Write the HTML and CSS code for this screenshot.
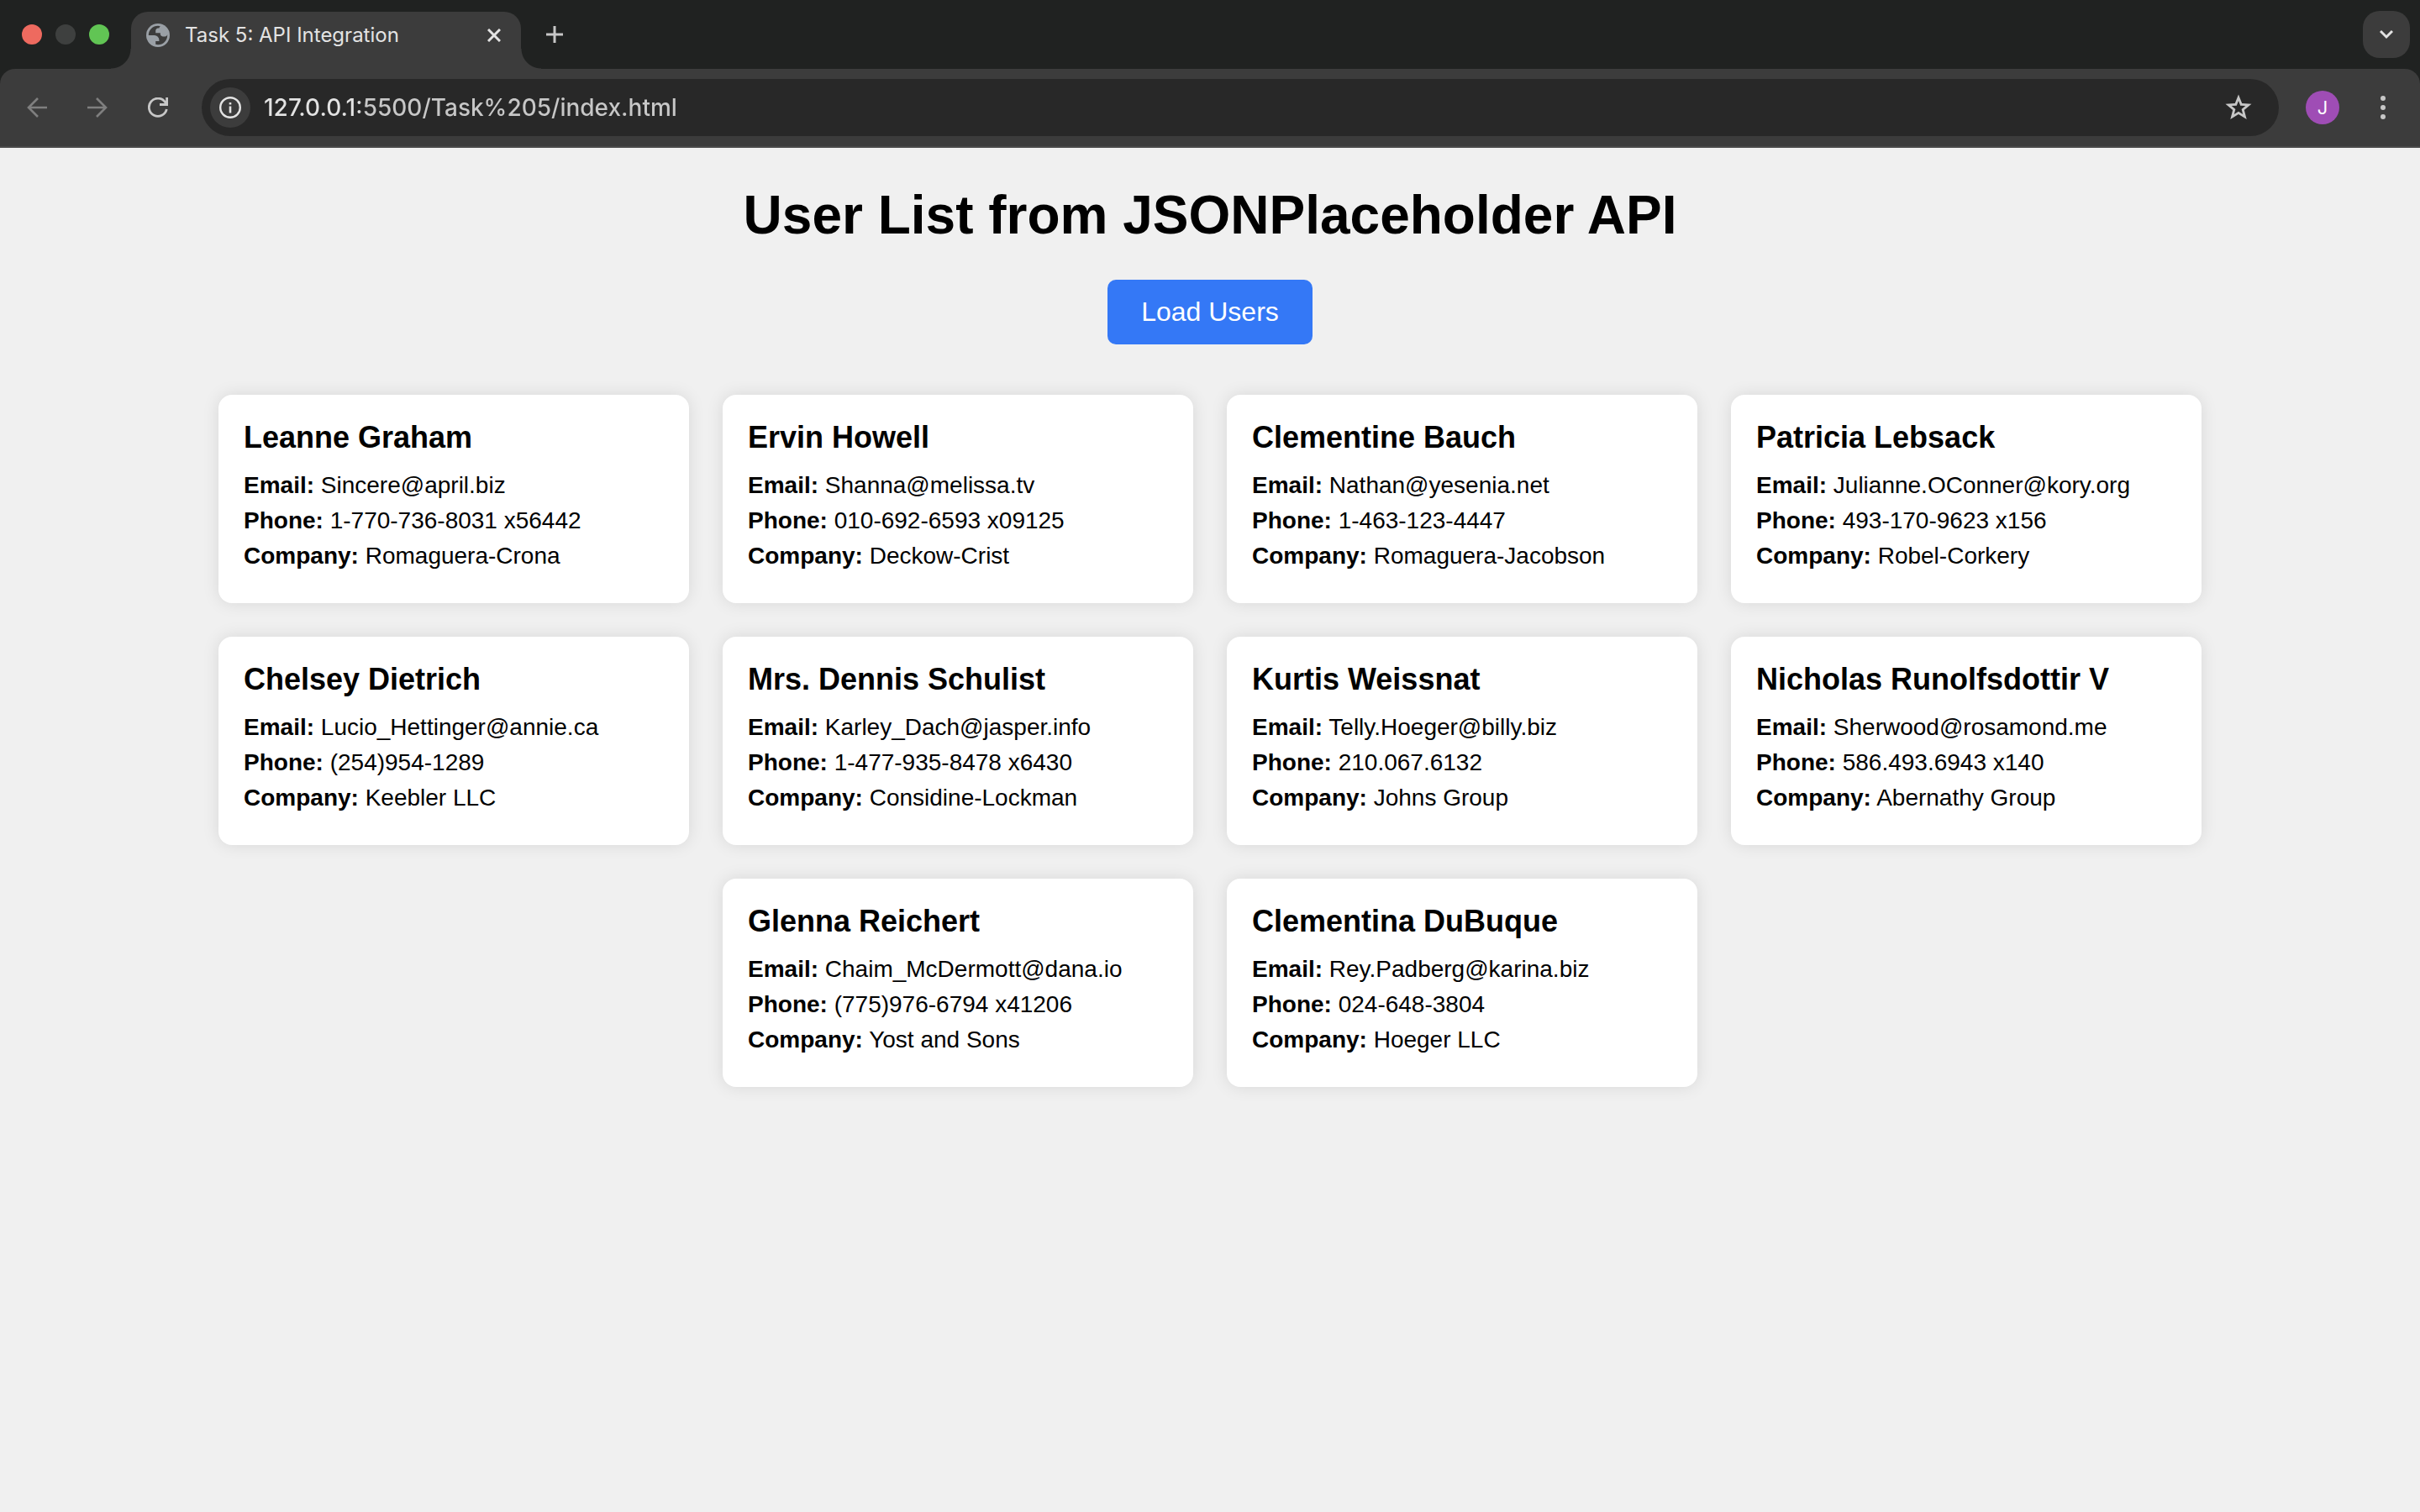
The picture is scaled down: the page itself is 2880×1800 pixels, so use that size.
FILE: index.html
```html
<!DOCTYPE html>
<html lang="en">
<head>
<meta charset="utf-8">
<meta name="viewport" content="width=device-width, initial-scale=1">
<title>Task 5: API Integration</title>
<link rel="stylesheet" href="styles.css">
</head>
<body>
<header class="browser">
  <div class="tab-strip">
    <div class="lights">
      <button class="light light-close" type="button" aria-label="Close window"></button>
      <button class="light light-min" type="button" aria-label="Minimise window"></button>
      <button class="light light-max" type="button" aria-label="Maximise window"></button>
    </div>
    <div class="tab">
      <svg class="globe" viewBox="80 -880 800 800" aria-hidden="true"><circle cx="480" cy="-480" r="400" fill="#9aa0a6"/><path fill="#3c3c3c" d="M480-160q133 0 226.500-93.500T800-480q0-7-.5-14.500T799-507q-5 29-27 48t-52 19h-80q-33 0-56.500-23.500T560-520v-40H400v-80q0-33 23.500-56.500T480-720h40q0-23 12.500-40.500T563-789q-20-5-40.500-8t-42.500-3q-134 0-227 93t-93 227h200q66 0 113 47t47 113v40H400v110q20 5 39.500 7.500T480-160Z"/></svg>
      <span class="tab-title">Task 5: API Integration</span>
      <button class="icon-button tab-close" type="button" aria-label="Close tab"><svg class="icon-close" viewBox="0 0 16 16"><path d="M1 1L15 15M15 1L1 15" stroke="#e3e3e3" stroke-width="3"/></svg></button>
    </div>
    <button class="icon-button new-tab" type="button" aria-label="New tab"><svg class="icon-plus" viewBox="0 0 20 20"><path d="M10 0V20M0 10H20" stroke="#c7c7c7" stroke-width="3"/></svg></button>
    <button class="icon-button tab-search" type="button" aria-label="Search tabs"><svg class="icon-close" viewBox="0 0 16 16"><path d="M1 4L8 11L15 4" fill="none" stroke="#e3e3e3" stroke-width="3"/></svg></button>
  </div>
  <div class="toolbar">
    <nav class="nav-buttons">
      <button class="icon-button" type="button" aria-label="Back"><svg class="icon" viewBox="0 0 24 24"><path d="M24 12H2M13 1L2 12L13 23" fill="none" stroke="#7f7f7f" stroke-width="2.600"/></svg></button>
      <button class="icon-button" type="button" aria-label="Forward"><svg class="icon" viewBox="0 0 24 24"><path d="M0 12H22M11 1L22 12L11 23" fill="none" stroke="#7f7f7f" stroke-width="2.600"/></svg></button>
      <button class="icon-button" type="button" aria-label="Reload"><svg class="icon" viewBox="0 0 24 24"><path d="M22.300 14A10.600 10.600 0 1 1 20.500 5.500L22 8M22.600 0V8.500H14" fill="none" stroke="#c7c7c7" stroke-width="2.800"/></svg></button>
    </nav>
    <div class="omnibox">
      <button class="icon-button site-info" type="button" aria-label="Site information"><svg class="icon-info" viewBox="0 0 26 26"><circle cx="13" cy="13" r="11.800" fill="none" stroke="#e3e3e3" stroke-width="2.400"/><path d="M13 11.500V19.500M13 7V9.600" stroke="#e3e3e3" stroke-width="2.600"/></svg></button>
      <input class="address" type="text" aria-label="Address" value="127.0.0.1:5500/Task%205/index.html">
      <button class="icon-button" type="button" aria-label="Bookmark this page"><svg class="icon-star" viewBox="0 0 32 32"><path fill-rule="evenodd" d="M16 0.500L20.200 11L31.500 11.800L22.800 19L25.700 30L16 24L6.300 30L9.200 19L0.500 11.800L11.800 11ZM16 8L13.800 13.700L7.700 14.100L12.400 18L10.800 24L16 20.700L21.200 24L19.600 18L24.300 14.100L18.200 13.700Z" fill="#c7c7c7"/></svg></button>
    </div>
    <button class="avatar" type="button" aria-label="Profile J">J</button>
    <button class="icon-button menu" type="button" aria-label="Browser menu"><svg class="icon-menu" viewBox="0 0 8 28" fill="#c7c7c7"><circle cx="4" cy="3" r="3"/><circle cx="4" cy="14" r="3"/><circle cx="4" cy="25" r="3"/></svg></button>
  </div>
</header>
<main class="page">
  <h1 class="title">User List from JSONPlaceholder API</h1>
  <button class="load" type="button">Load Users</button>
  <section class="users">
    <article class="card"><h2 class="name">Leanne Graham</h2><p class="row"><strong>Email:</strong> Sincere@april.biz</p><p class="row"><strong>Phone:</strong> 1-770-736-8031 x56442</p><p class="row"><strong>Company:</strong> Romaguera-Crona</p></article>
    <article class="card"><h2 class="name">Ervin Howell</h2><p class="row"><strong>Email:</strong> Shanna@melissa.tv</p><p class="row"><strong>Phone:</strong> 010-692-6593 x09125</p><p class="row"><strong>Company:</strong> Deckow-Crist</p></article>
    <article class="card"><h2 class="name">Clementine Bauch</h2><p class="row"><strong>Email:</strong> Nathan@yesenia.net</p><p class="row"><strong>Phone:</strong> 1-463-123-4447</p><p class="row"><strong>Company:</strong> Romaguera-Jacobson</p></article>
    <article class="card"><h2 class="name">Patricia Lebsack</h2><p class="row"><strong>Email:</strong> Julianne.OConner@kory.org</p><p class="row"><strong>Phone:</strong> 493-170-9623 x156</p><p class="row"><strong>Company:</strong> Robel-Corkery</p></article>
    <article class="card"><h2 class="name">Chelsey Dietrich</h2><p class="row"><strong>Email:</strong> Lucio_Hettinger@annie.ca</p><p class="row"><strong>Phone:</strong> (254)954-1289</p><p class="row"><strong>Company:</strong> Keebler LLC</p></article>
    <article class="card"><h2 class="name">Mrs. Dennis Schulist</h2><p class="row"><strong>Email:</strong> Karley_Dach@jasper.info</p><p class="row"><strong>Phone:</strong> 1-477-935-8478 x6430</p><p class="row"><strong>Company:</strong> Considine-Lockman</p></article>
    <article class="card"><h2 class="name">Kurtis Weissnat</h2><p class="row"><strong>Email:</strong> Telly.Hoeger@billy.biz</p><p class="row"><strong>Phone:</strong> 210.067.6132</p><p class="row"><strong>Company:</strong> Johns Group</p></article>
    <article class="card"><h2 class="name">Nicholas Runolfsdottir V</h2><p class="row"><strong>Email:</strong> Sherwood@rosamond.me</p><p class="row"><strong>Phone:</strong> 586.493.6943 x140</p><p class="row"><strong>Company:</strong> Abernathy Group</p></article>
    <article class="card"><h2 class="name">Glenna Reichert</h2><p class="row"><strong>Email:</strong> Chaim_McDermott@dana.io</p><p class="row"><strong>Phone:</strong> (775)976-6794 x41206</p><p class="row"><strong>Company:</strong> Yost and Sons</p></article>
    <article class="card"><h2 class="name">Clementina DuBuque</h2><p class="row"><strong>Email:</strong> Rey.Padberg@karina.biz</p><p class="row"><strong>Phone:</strong> 024-648-3804</p><p class="row"><strong>Company:</strong> Hoeger LLC</p></article>
  </section>
</main>
</body>
</html>
```
FILE: styles.css
```css
* {
  box-sizing: border-box;
}

body {
  margin: 0;
  background: #f0f0f0;
  color: #000;
  font-family: "Liberation Sans", Arial, sans-serif;
}

button {
  margin: 0;
  padding: 0;
  border: 0;
  background: none;
  font: inherit;
  cursor: pointer;
}

svg {
  display: block;
}

/* Browser frame */
.browser {
  background: #202221;
  font-family: Inter, "Noto Sans", sans-serif;
}

.tab-strip {
  display: flex;
  align-items: center;
  height: 82px;
  padding: 0 12px 0 26px;
}

.lights {
  display: flex;
  gap: 16px;
}

.light {
  width: 24px;
  height: 24px;
  border-radius: 50%;
}

.light-close {
  background: #ee6a5f;
}

.light-min {
  background: #3e403f;
}

.light-max {
  background: #61c554;
}

.tab {
  position: relative;
  display: flex;
  align-items: center;
  align-self: flex-end;
  width: 464px;
  height: 68px;
  margin-left: 26px;
  padding: 0 24px 12px 18px;
  border-radius: 20px 20px 0 0;
  background: #3c3c3c;
}

/* Flared feet where the tab meets the toolbar */
.tab::before,
.tab::after {
  content: "";
  position: absolute;
  bottom: 0;
  width: 24px;
  height: 24px;
}

.tab::before {
  right: 100%;
  background: radial-gradient(circle at 0 0, transparent 23px, #3c3c3c 24px);
}

.tab::after {
  left: 100%;
  background: radial-gradient(circle at 100% 0, transparent 23px, #3c3c3c 24px);
}

.globe {
  width: 28px;
  height: 28px;
}

.tab-title {
  flex: 1;
  margin-left: 18px;
  color: #e3e3e3;
  font-size: 24px;
  line-height: 32px;
  white-space: nowrap;
}

.icon-button {
  display: flex;
  align-items: center;
  justify-content: center;
}

.icon-close {
  width: 16px;
  height: 16px;
}

.icon-plus {
  width: 20px;
  height: 20px;
}

.new-tab {
  margin-left: 30px;
}

.tab-search {
  width: 56px;
  height: 56px;
  margin-left: auto;
  border-radius: 20px;
  background: #3c3c3c;
}

.toolbar {
  display: flex;
  align-items: center;
  height: 94px;
  padding: 0 40px 0 32px;
  border-bottom: 2px solid #4a4a4a;
  border-radius: 18px 18px 0 0;
  background: #3c3c3c;
}

.nav-buttons {
  display: flex;
  gap: 48px;
}

.icon {
  width: 24px;
  height: 24px;
}

.omnibox {
  display: flex;
  flex: 1;
  align-items: center;
  height: 68px;
  margin-left: 40px;
  padding: 0 32px 0 10px;
  border-radius: 34px;
  background: #282828;
}

.site-info {
  width: 48px;
  height: 48px;
  border-radius: 50%;
  background: #3c3c3c;
}

.icon-info {
  width: 26px;
  height: 26px;
}

/* The host part of the address is brighter than the path */
.address {
  flex: 1;
  min-width: 0;
  height: 48px;
  margin-left: 16px;
  padding: 0;
  border: 0;
  background: linear-gradient(90deg, #e3e3e3 114px, #c7c7c7 114px);
  background-clip: text;
  -webkit-background-clip: text;
  color: transparent;
  font: inherit;
  font-size: 28px;
  font-weight: 500;
}

.icon-star {
  width: 32px;
  height: 32px;
}

.avatar {
  width: 40px;
  height: 40px;
  margin-left: 32px;
  border-radius: 50%;
  background: #9f4db5;
  color: #fff;
  font-size: 22px;
  line-height: 40px;
}

.menu {
  margin-left: 48px;
}

.icon-menu {
  width: 8px;
  height: 28px;
}

/* User list */
.page {
  display: flex;
  flex-direction: column;
  align-items: center;
  padding: 42px 40px;
}

.title {
  margin: 0;
  font-size: 64px;
  line-height: 77px;
}

.load {
  margin-top: 38px;
  padding: 20px 40px;
  border-radius: 10px;
  background: #3478f6;
  color: #fff;
  font-size: 32px;
  line-height: 37px;
}

.users {
  display: flex;
  flex-wrap: wrap;
  justify-content: center;
  gap: 40px;
  max-width: 2600px;
  margin-top: 60px;
}

.card {
  width: 560px;
  padding: 30px 30px 35px;
  border-radius: 16px;
  background: #fff;
  box-shadow: 0 0 20px rgba(0, 0, 0, 0.1);
}

.name {
  margin: 0 0 15px;
  font-size: 36px;
  line-height: 42px;
}

.row {
  margin: 0;
  font-size: 28px;
  line-height: 42px;
}
```
